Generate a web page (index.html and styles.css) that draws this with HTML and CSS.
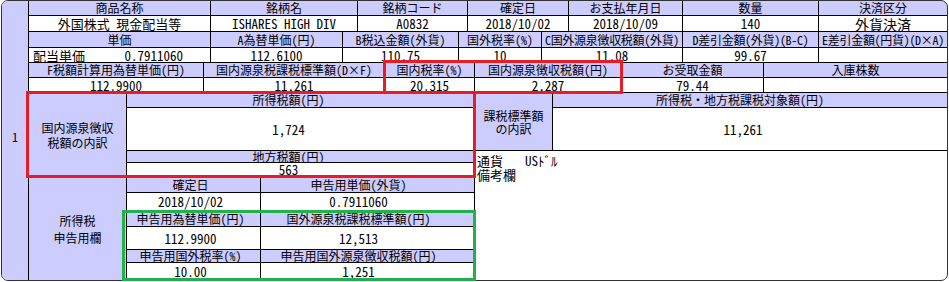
FILE: index.html
```html
<!DOCTYPE html>
<html lang="ja">
<head>
<meta charset="utf-8">
<title>配当明細</title>
<link rel="stylesheet" href="styles.css">
</head>
<body>
<div class="page">
  <div class="sheet">
    <div class="num">1</div>
    <div class="main">
      <div class="row r1">
        <div class="c h">商品名称</div>
        <div class="c h">銘柄名</div>
        <div class="c h">銘柄コード</div>
        <div class="c h">確定日</div>
        <div class="c h">お支払年月日</div>
        <div class="c h">数量</div>
        <div class="c h">決済区分</div>
      </div>
      <div class="row r1">
        <div class="c d">外国株式　現金配当等</div>
        <div class="c d">ISHARES HIGH DIV</div>
        <div class="c d">A0832</div>
        <div class="c d">2018/10/02</div>
        <div class="c d">2018/10/09</div>
        <div class="c d">140</div>
        <div class="c d big">外貨決済</div>
      </div>
      <div class="row r2">
        <div class="c h">単価</div>
        <div class="c h">A為替単価(円)</div>
        <div class="c h">B税込金額(外貨)</div>
        <div class="c h">国外税率(%)</div>
        <div class="c h tight">C国外源泉徴収税額(外貨)</div>
        <div class="c h tight">D差引金額(外貨)(B-C)</div>
        <div class="c h tight">E差引金額(円貨)(D×A)</div>
      </div>
      <div class="row r2">
        <div class="c d split"><span>配当単価</span><span class="unit">0.7911060</span></div>
        <div class="c d">112.6100</div>
        <div class="c d">110.75</div>
        <div class="c d">10</div>
        <div class="c d">11.08</div>
        <div class="c d">99.67</div>
        <div class="c d"></div>
      </div>
      <div class="row r3">
        <div class="c h">F税額計算用為替単価(円)</div>
        <div class="c h">国内源泉税課税標準額(D×F)</div>
        <div class="c h">国内税率(%)</div>
        <div class="c h">国内源泉徴収税額(円)</div>
        <div class="c h">お受取金額</div>
        <div class="c h">入庫株数</div>
      </div>
      <div class="row r3">
        <div class="c d">112.9900</div>
        <div class="c d">11,261</div>
        <div class="c d">20.315</div>
        <div class="c d">2,287</div>
        <div class="c d">79.44</div>
        <div class="c d"></div>
      </div>
      <div class="lower">
        <div class="lower-left">
          <div class="mid">
            <div class="label l1">国内源泉徴収<br>税額の内訳</div>
            <div class="stack">
              <div class="c h hA">所得税額(円)</div>
              <div class="c d dA">1,724</div>
              <div class="c h hB">地方税額(円)</div>
              <div class="c d dB">563</div>
            </div>
          </div>
          <div class="decl">
            <div class="label l3">所得税<br>申告用欄</div>
            <div class="decl-grid">
              <div class="c h k1">確定日</div>
              <div class="c h k2">申告用単価(外貨)</div>
              <div class="c d k1">2018/10/02</div>
              <div class="c d k2">0.7911060</div>
              <div class="c h k1">申告用為替単価(円)</div>
              <div class="c h k2">国外源泉税課税標準額(円)</div>
              <div class="c d k1">112.9900</div>
              <div class="c d k2">12,513</div>
              <div class="c h k1">申告用国外税率(%)</div>
              <div class="c h k2">申告用国外源泉徴収税額(円)</div>
              <div class="c d k1">10.00</div>
              <div class="c d k2">1,251</div>
            </div>
          </div>
        </div>
        <div class="lower-right">
          <div class="kazei">
            <div class="label l2">課税標準額<br>の内訳</div>
            <div class="stack">
              <div class="c h hK">所得税・地方税課税対象額(円)</div>
              <div class="c d dK">11,261</div>
            </div>
          </div>
          <div class="memo">
            <div class="memo-line"><span class="memo-key">通貨</span><span>USﾄﾞﾙ</span></div>
            <div class="memo-line">備考欄</div>
          </div>
        </div>
      </div>
    </div>
  </div>
  <div class="mark red small"></div>
  <div class="mark red large"></div>
  <div class="mark green"></div>
</div>
</body>
</html>
```
FILE: styles.css
```css
html, body {
  margin: 0;
  padding: 0;
  background: #fff;
}
body {
  font-family: "Noto Sans CJK JP", "Noto Sans", sans-serif;
  font-feature-settings: "hwid";
  color: #000;
}
.page {
  position: relative;
  width: 949px;
  height: 282px;
}
.sheet {
  box-sizing: border-box;
  margin-left: 1px;
  width: 947px;
  height: 281px;
  border: 1px solid #333;
  border-radius: 7px;
  overflow: hidden;
  display: flex;
}
.num {
  width: 26px;
  flex: none;
  background: #ccccff;
  display: flex;
  align-items: center;
  justify-content: center;
  font-size: 12px;
  padding-bottom: 9px;
  box-sizing: border-box;
}
.main {
  flex: 1;
  background: #000;
  padding-left: 1px;
  display: flex;
  flex-direction: column;
  gap: 1px;
}
.row {
  display: grid;
  column-gap: 1px;
  flex: none;
}
.r1 { grid-template-columns: 181px 146px 109px 100px 113px 135px 128px; }
.r2 { grid-template-columns: 181px 131px 115px 82px 140px 135px 128px; }
.r3 { grid-template-columns: 174px 180px 89px 146px 141px 183px; }
.row:nth-child(1) { height: 14px; }
.row:nth-child(2) { height: 15px; }
.row:nth-child(3) { height: 15px; }
.row:nth-child(4) { height: 14px; }
.row:nth-child(5) { height: 14px; }
.row:nth-child(6) { height: 14px; }

.c {
  display: flex;
  align-items: center;
  justify-content: center;
  white-space: nowrap;
  line-height: 1;
}
.h {
  background: #ccccff;
  font-size: 12px;
}
.tight { letter-spacing: -0.3px; }
.d {
  background: #fff;
  font-size: 13px;
}
.big { font-size: 14px; }
.split {
  justify-content: space-between;
  padding: 0 27px 0 4px;
}

.lower {
  flex: 1;
  display: flex;
  gap: 1px;
}
.lower-left {
  width: 445px;
  flex: none;
  display: flex;
  flex-direction: column;
  gap: 1px;
}
.lower-right {
  flex: 1;
  display: flex;
  flex-direction: column;
  gap: 1px;
}
.mid {
  height: 83px;
  flex: none;
  display: flex;
  gap: 1px;
}
.label {
  width: 97px;
  flex: none;
  background: #ccccff;
  display: flex;
  align-items: center;
  justify-content: center;
  text-align: center;
  font-size: 12px;
}
.l1 { line-height: 15px; }
.l2 { width: 77px; line-height: 13px; }
.l3 { line-height: 17px; }
.stack {
  flex: 1;
  display: flex;
  flex-direction: column;
  gap: 1px;
}
.hA { height: 14px; padding-right: 24px; }
.dA { height: 42px; padding-right: 24px; }
.hB { height: 11px; padding-right: 24px; }
.dB { height: 13px; padding-right: 24px; }
.hK { height: 14px; padding-right: 20px; }
.dK { height: 42px; padding-right: 14px; }

.decl {
  flex: 1;
  display: flex;
  gap: 1px;
}
.decl-grid {
  flex: 1;
  display: grid;
  grid-template-columns: 133px 213px;
  grid-template-rows: 15px 17px 15px 22px 12px 17px;
  gap: 1px;
}
.k1 { padding-right: 6px; }
.k2 { padding-right: 18px; }

.kazei {
  height: 57px;
  flex: none;
  display: flex;
  gap: 1px;
}
.memo {
  flex: 1;
  background: #fff;
  font-size: 13px;
  line-height: 14px;
  padding: 3px 0 0 2px;
}
.memo-key {
  display: inline-block;
  width: 48px;
}

.mark {
  position: absolute;
  box-sizing: border-box;
  border: 3px solid;
  pointer-events: none;
}
.red { border-color: #e81c24; }
.green { border-color: #22b14c; }
.small { left: 383px; top: 60px; width: 240px; height: 34px; }
.large { left: 26px; top: 91px; width: 450px; height: 87px; }
.green { left: 122px; top: 210px; width: 354px; height: 71px; }
```
